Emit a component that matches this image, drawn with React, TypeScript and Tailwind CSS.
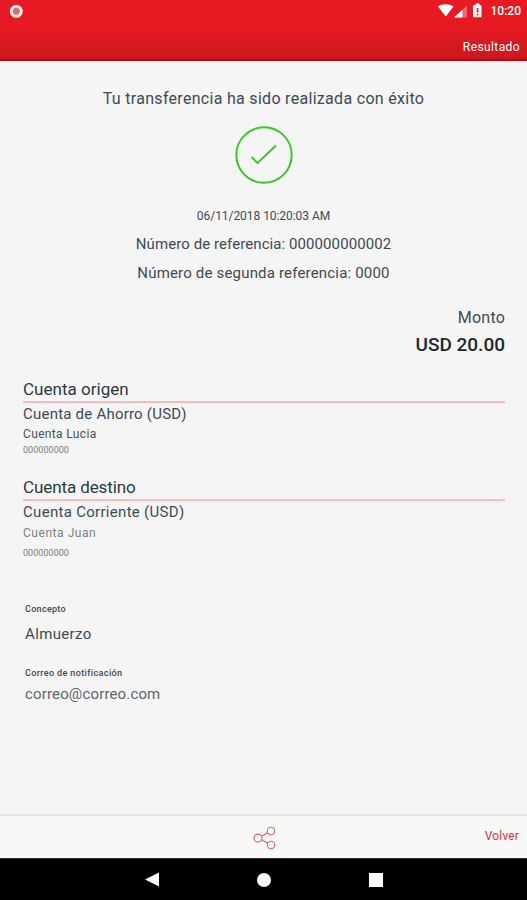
const accounts = [
  {
    title: "Cuenta origen",
    titleClass: "tracking-[0.02px]",
    type: "Cuenta de Ahorro (USD)",
    typeClass: "h-[21px] tracking-[0.22px]",
    alias: "Cuenta Lucia",
    aliasClass: "h-5 leading-5 tracking-[0.35px] text-[#46525c]",
    number: "000000000",
    numberClass: "leading-3",
  },
  {
    title: "Cuenta destino",
    titleClass: "tracking-[-0.1px]",
    type: "Cuenta Corriente (USD)",
    typeClass: "h-[21px] tracking-[0.3px]",
    alias: "Cuenta Juan",
    aliasClass: "h-[22px] leading-[22px] tracking-[0.55px] text-[#7a8085]",
    number: "000000000",
    numberClass: "leading-[18px]",
  },
];

const Header = () => (
  <header className="h-[61px] shrink-0 border-b-2 border-[#c00510] bg-gradient-to-b from-[#e71a23] from-40% to-[#cb171f] text-white">
    <div className="flex h-[22px] items-center justify-between pl-[9px] pr-[6px]">
      <svg width="15" height="15" viewBox="0 0 15 15">
        <circle cx="7.3" cy="7.3" r="5" fill="#e8646a" stroke="#fdeeee" strokeWidth="3" />
      </svg>
      <div className="flex h-full items-center">
        <svg width="46" height="18" viewBox="0 0 46 18" fill="#fff">
          <path d="M0 4.6C4 1.4 11.500 1.400 15.500 4.600L7.750 14.500Z" />
          <path d="M16 15.500L29 3.500V15.500Z" fillOpacity="0.35" />
          <path d="M16 15.500L24.500 7.700V15.500Z" />
          <path fillRule="evenodd" d="M37.500 1.500h4v1.700h2v12h-8.500v-12h2.500zM38.700 6v4.500h1.700V6zM38.700 11.700v1.700h1.700v-1.700z" />
        </svg>
        <span className="ml-[7px] text-[12px] font-medium">10:20</span>
      </div>
    </div>
    <div className="flex h-[48px] justify-end pr-[7px] text-[12px] leading-[50px] tracking-[0.4px]">
      Resultado
    </div>
  </header>
);

const Footer = () => (
  <footer className="flex h-[44px] shrink-0 items-center justify-between border-t-2 border-[#e6e6e6] bg-[#f8f8f7] pr-[8px] pl-[253px] text-[#e0303f]">
    <svg className="mt-[1px]" width="23" height="24" viewBox="0 0 23 24" fill="none" stroke="#e4606b" strokeWidth="1.100">
      <circle cx="5" cy="12" r="3.900" />
      <circle cx="18" cy="5" r="3.700" />
      <circle cx="18" cy="19" r="3.700" />
      <path d="M8.500 10.200L14.700 6.800M8.500 13.800L14.700 17.200" />
    </svg>
    <span className="mb-[2px] text-[12px] leading-5 tracking-[0.15px]">Volver</span>
  </footer>
);

const NavigationBar = () => (
  <nav className="flex h-[42px] shrink-0 items-center justify-center gap-[98px] border-t border-[#333] bg-black">
    <svg width="14" height="15" viewBox="0 0 14 15" fill="#fff">
      <path d="M0 7.500L14 0.500V14.500Z" />
    </svg>
    <div className="size-[14px] rounded-full bg-white" />
    <div className="size-[14px] bg-white" />
  </nav>
);

export default function App() {
  return (
    <div className="flex h-[900px] w-[527px] flex-col overflow-hidden bg-[#f5f5f5] font-['Roboto',sans-serif] text-[#3d4a56]">
      <Header />
      <main className="flex-1 pt-[25px]">
        <section className="flex flex-col items-center whitespace-nowrap">
          <h1 className="text-[16px] leading-[25px] tracking-[0.3px]">
            Tu transferencia ha sido realizada con éxito
          </h1>
          <svg className="mt-[15px]" width="58" height="58" viewBox="0 0 58 58" fill="none" stroke="#37c91f">
            <circle cx="29" cy="29" r="27.700" strokeWidth="1.900" />
            <path d="M16.500 31L22.500 37L41 19.500" strokeWidth="1.900" />
          </svg>
          <p className="mt-[22px] text-[12px] leading-5 tracking-[-0.05px]">06/11/2018 10:20:03 AM</p>
          <p className="mt-[3px] text-[15px] leading-[30px] tracking-[0.08px]">Número de referencia: 000000000002</p>
          <p className="text-[15px] leading-[29px] tracking-[0.18px]">Número de segunda referencia: 0000</p>
        </section>

        <section className="mt-[18px] flex flex-col items-end pr-[22px]">
          <span className="text-[16px] leading-6 tracking-[0.2px]">Monto</span>
          <span className="mt-[1px] text-[19px] font-medium leading-7 text-[#1c2630]">USD 20.00</span>
        </section>

        <section className="mt-[18px] pl-[23px] pr-[22px]">
          {accounts.map((account) => (
            <div key={account.title} className="h-[98px]">
              <h2 className={`text-[17px] leading-6 text-[#2b3a47] ${account.titleClass}`}>{account.title}</h2>
              <div className="h-[2px] bg-[#f6bcbd]" />
              <p className={`text-[15px] leading-[22px] ${account.typeClass}`}>{account.type}</p>
              <p className={`text-[12px] ${account.aliasClass}`}>{account.alias}</p>
              <p className={`text-[9px] tracking-[0.05px] text-[#777d82] ${account.numberClass}`}>{account.number}</p>
            </div>
          ))}
        </section>

        <section className="mt-[30px] pl-[25px]">
          <p className="text-[9px] font-medium leading-3 tracking-[0.3px]">Concepto</p>
          <p className="mt-[7px] text-[15px] leading-6 tracking-[0.35px]">Almuerzo</p>
          <p className="mt-[21px] text-[9px] font-medium leading-3 tracking-[0.38px]">Correo de notificación</p>
          <p className="mt-[3px] text-[15px] leading-6 tracking-[0.15px] text-[#5c6670]">correo@correo.com</p>
        </section>
      </main>
      <Footer />
      <NavigationBar />
    </div>
  );
}
